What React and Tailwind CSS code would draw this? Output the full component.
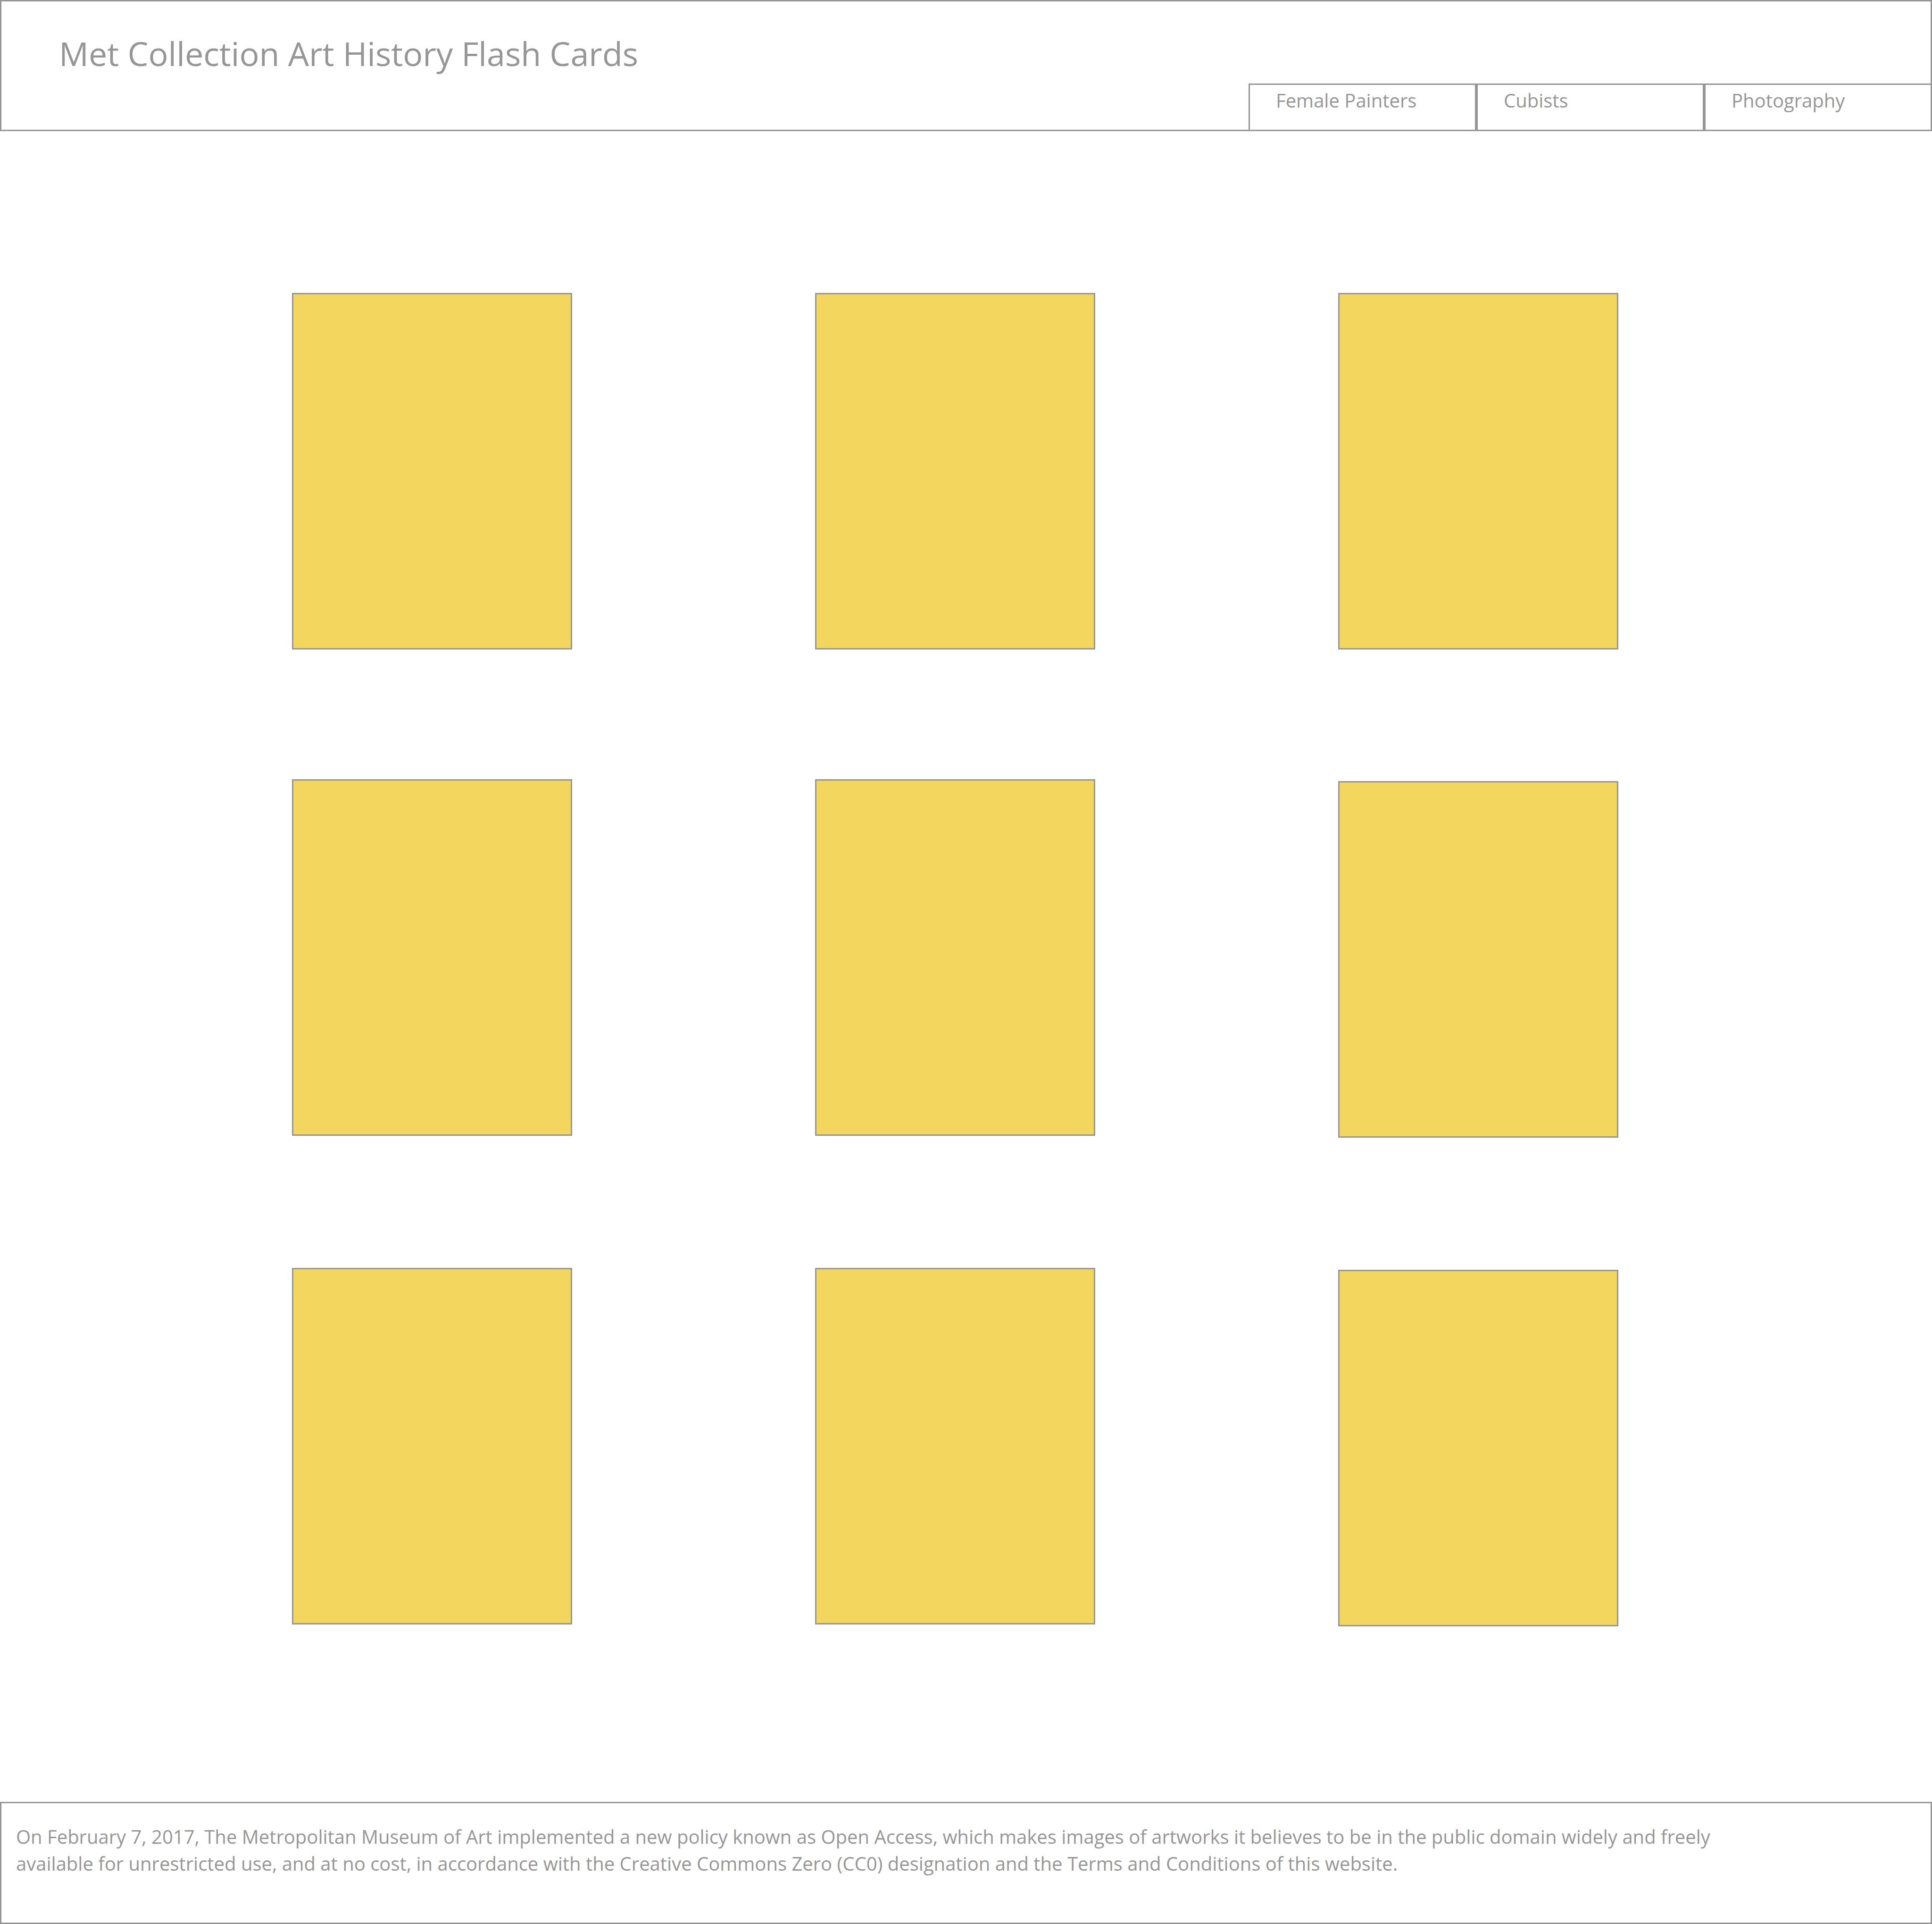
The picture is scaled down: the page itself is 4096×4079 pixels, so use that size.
const tabs = ["Female Painters", "Cubists", "Photography"];

const columns = [
  { id: "left", spacing: ["", "mt-[275px]", "mt-[280px]"] },
  { id: "middle", spacing: ["", "mt-[275px]", "mt-[280px]"] },
  { id: "right", spacing: ["", "mt-[279px]", "mt-[280px]"] },
];

function Card({ label, spacing }) {
  return (
    <button
      type="button"
      aria-label={label}
      className={"aspect-[594/756] w-full border-3 border-[#969696] bg-[#f2d65d] " + spacing}
    />
  );
}

export default function App() {
  return (
    <div className="flex min-h-screen flex-col bg-white font-['Open_Sans','Noto_Sans',sans-serif] text-[#969696]">
      <header className="flex flex-col border-3 border-[#969696]">
        <h1 className="px-[122px] pt-[60px] text-[70px] leading-[100px]">
          Met Collection Art History Flash Cards
        </h1>
        <nav className="-mr-[3px] -mb-[3px] mt-[14px] grid w-[1449px] grid-cols-3 self-end">
          {tabs.map((tab) => (
            <a
              key={tab}
              href="#cards"
              className="h-[101px] border-3 border-[#969696] px-[55px] pt-[4px] text-[40px] leading-[57px]"
            >
              {tab}
            </a>
          ))}
        </nav>
      </header>

      <main id="cards" className="grid flex-1 grid-cols-3 content-start gap-x-[515px] pt-[343px] pr-[665px] pl-[619px]">
        {columns.map((column) => (
          <div key={column.id} className="flex flex-col">
            {column.spacing.map((spacing, i) => (
              <Card key={i} spacing={spacing} label={"Flash card " + column.id + " " + (i + 1)} />
            ))}
          </div>
        ))}
      </main>

      <footer className="border-3 border-[#969696] px-[31px] pt-[42px] pb-[97px] text-[40px] leading-[57px]">
        <p>
          On February 7, 2017, The Metropolitan Museum of Art implemented a new policy known as Open Access, which makes images of artworks it believes to be in the public domain widely and freely
          <br />
          available for unrestricted use, and at no cost, in accordance with the Creative Commons Zero (CC0) designation and the Terms and Conditions of this website.
        </p>
      </footer>
    </div>
  );
}
